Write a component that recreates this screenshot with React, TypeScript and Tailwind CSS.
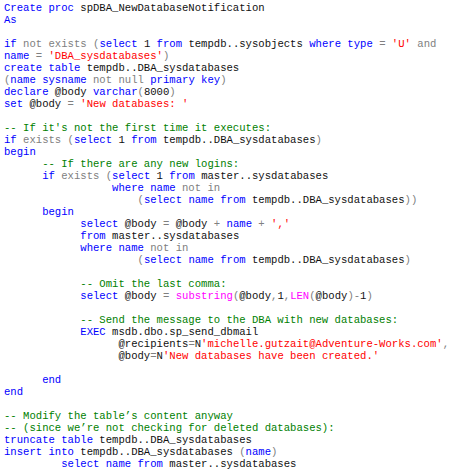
import React from "react";

type Tok = [string, string];

const color: Record<string, string> = {
  k: "text-[#0000ff]",
  g: "text-[#808080]",
  s: "text-[#ff0000]",
  c: "text-[#008000]",
  f: "text-[#ff00ff]",
  t: "text-[#111111]",
};

const sp = (n: number): Tok => ["t", " ".repeat(n)];

const lines: Tok[][] = [
  [["k", "Create proc "], ["t", "spDBA_NewDatabaseNotification"]],
  [["k", "As"]],
  [],
  [["k", "if "], ["g", "not exists ("], ["k", "select "], ["t", "1 "], ["k", "from "], ["t", "tempdb..sysobjects "], ["k", "where type "], ["g", "= "], ["s", "'U' "], ["g", "and"]],
  [["k", "name "], ["g", "= "], ["s", "'DBA_sysdatabases'"], ["g", ")"]],
  [["k", "create table "], ["t", "tempdb..DBA_sysdatabases"]],
  [["g", "("], ["k", "name sysname "], ["g", "not null "], ["k", "primary key"], ["g", ")"]],
  [["k", "declare "], ["t", "@body "], ["k", "varchar"], ["g", "("], ["t", "8000"], ["g", ")"]],
  [["k", "set "], ["t", "@body "], ["g", "= "], ["s", "'New databases: '"]],
  [],
  [["c", "-- If it's not the first time it executes:"]],
  [["k", "if "], ["g", "exists ("], ["k", "select "], ["t", "1 "], ["k", "from "], ["t", "tempdb..DBA_sysdatabases"], ["g", ")"]],
  [["k", "begin"]],
  [sp(6), ["c", "-- If there are any new logins:"]],
  [sp(6), ["k", "if "], ["g", "exists ("], ["k", "select "], ["t", "1 "], ["k", "from "], ["t", "master..sysdatabases"]],
  [sp(17), ["k", "where name "], ["g", "not in"]],
  [sp(21), ["g", "("], ["k", "select name from "], ["t", "tempdb..DBA_sysdatabases"], ["g", "))"]],
  [sp(6), ["k", "begin"]],
  [sp(12), ["k", "select "], ["t", "@body "], ["g", "= "], ["t", "@body "], ["g", "+ "], ["k", "name "], ["g", "+ "], ["s", "','"]],
  [sp(12), ["k", "from "], ["t", "master..sysdatabases"]],
  [sp(12), ["k", "where name "], ["g", "not in"]],
  [sp(21), ["g", "("], ["k", "select name from "], ["t", "tempdb..DBA_sysdatabases"], ["g", ")"]],
  [],
  [sp(12), ["c", "-- Omit the last comma:"]],
  [sp(12), ["k", "select "], ["t", "@body "], ["g", "= "], ["f", "substring"], ["g", "("], ["t", "@body"], ["g", ","], ["t", "1"], ["g", ","], ["f", "LEN"], ["g", "("], ["t", "@body"], ["g", ")-"], ["t", "1"], ["g", ")"]],
  [],
  [sp(12), ["c", "-- Send the message to the DBA with new databases:"]],
  [sp(12), ["k", "EXEC "], ["t", "msdb.dbo.sp_send_dbmail"]],
  [sp(18), ["t", "@recipients"], ["g", "="], ["t", "N"], ["s", "'michelle.gutzait@Adventure-Works.com'"], ["g", ","]],
  [sp(18), ["t", "@body"], ["g", "="], ["t", "N"], ["s", "'New databases have been created.'"]],
  [],
  [sp(6), ["k", "end"]],
  [["k", "end"]],
  [],
  [["c", "-- Modify the table\u2019s content anyway"]],
  [["c", "-- (since we\u2019re not checking for deleted databases):"]],
  [["k", "truncate table "], ["t", "tempdb..DBA_sysdatabases"]],
  [["k", "insert into "], ["t", "tempdb..DBA_sysdatabases "], ["g", "("], ["k", "name"], ["g", ")"]],
  [sp(9), ["k", "select name from "], ["t", "master..sysdatabases"]],
];

const App = () => {
  return (
    <div className="w-[450px] h-[472px] bg-white overflow-hidden">
      <pre className="pl-[4px] pt-[2px] font-['Liberation_Mono','Courier_New',monospace] text-[10.6px] leading-[12px] whitespace-pre">
        {lines.map((line, i) => (
          <div key={i} className="h-[12px]">
            {line.map(([kind, text], j) => (
              <span key={j} className={color[kind]}>
                {text}
              </span>
            ))}
          </div>
        ))}
      </pre>
    </div>
  );
};

export default App;
